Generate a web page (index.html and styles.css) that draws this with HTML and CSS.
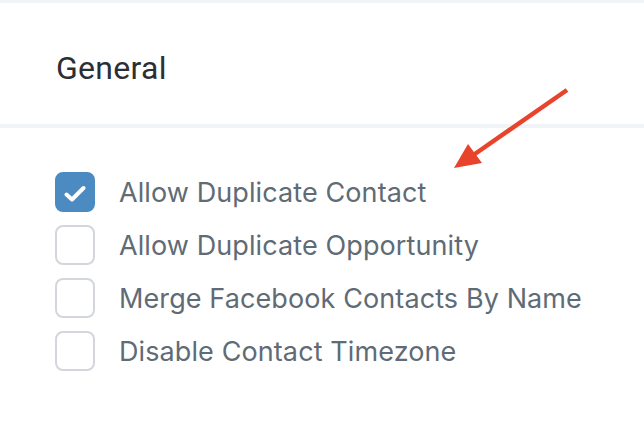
FILE: index.html
```html
<!DOCTYPE html>
<html lang="en">
<head>
    <meta charset="UTF-8">
    <meta name="viewport" content="width=device-width, initial-scale=1.0">
    <title>Settings - General</title>
    <link rel="stylesheet" href="styles.css">
</head>
<body>
    <div class="page">
        <div class="card-header">
            <h2>General</h2>
        </div>

        <div class="card-body">
            <label class="option">
                <input type="checkbox" checked>
                <span class="box">
                    <svg class="tick" viewBox="0 0 22 18" width="22" height="18">
                        <path d="M2.5 9.5L8 14.5L19.5 3" fill="none" stroke="#fff" stroke-width="4" stroke-linecap="round" stroke-linejoin="round"/>
                    </svg>
                </span>
                <span class="text">Allow Duplicate Contact</span>
            </label>
            <label class="option">
                <input type="checkbox">
                <span class="box"></span>
                <span class="text">Allow Duplicate Opportunity</span>
            </label>
            <label class="option">
                <input type="checkbox">
                <span class="box"></span>
                <span class="text">Merge Facebook Contacts By Name</span>
            </label>
            <label class="option">
                <input type="checkbox">
                <span class="box"></span>
                <span class="text">Disable Contact Timezone</span>
            </label>
        </div>

        <!-- annotation arrow drawn over the screenshot -->
        <svg class="arrow" width="644" height="424" viewBox="0 0 644 424">
            <line x1="567" y1="90" x2="472" y2="156" stroke="#e8432b" stroke-width="4.5"/>
            <polygon points="454,168 468,144 482,163" fill="#e8432b"/>
        </svg>
    </div>
</body>
</html>
```

FILE: styles.css
```css
body {
    margin: 0;
    background-color: #ffffff;
    font-family: Inter, "Open Sans", sans-serif;
}

.page {
    position: relative;
    width: 644px;
    height: 424px;
    border-top: 3px solid #f1f4f7;
    box-sizing: border-box;
    overflow: hidden;
}

.card-header {
    height: 125px;
    padding: 46px 0 0 56px;
    box-sizing: border-box;
    border-bottom: 4px solid #f1f4f7;
}

.card-header h2 {
    margin: 0;
    font-family: Roboto, sans-serif;
    font-weight: 400;
    font-size: 32px;
    line-height: 38px;
    letter-spacing: 0.3px;
    color: #2b2f35;
}

.card-body {
    display: flex;
    flex-direction: column;
    gap: 13px;
    padding: 44px 0 0 55px;
}

.option {
    display: flex;
    align-items: center;
    gap: 24px;
    cursor: pointer;
}

.option input {
    display: none;
}

.box {
    width: 40px;
    height: 40px;
    box-sizing: border-box;
    border: 2px solid #d3d7db;
    border-radius: 8px;
    display: flex;
    align-items: center;
    justify-content: center;
    flex-shrink: 0;
}

.option input:checked + .box {
    background-color: #4b8bc1;
    border-color: #4b8bc1;
}

.tick {
    margin-top: 4px;
}

.text {
    font-size: 27px;
    color: #5f6b75;
    letter-spacing: 0.1px;
}

.arrow {
    position: absolute;
    top: -3px;
    left: 0;
    pointer-events: none;
}
```
